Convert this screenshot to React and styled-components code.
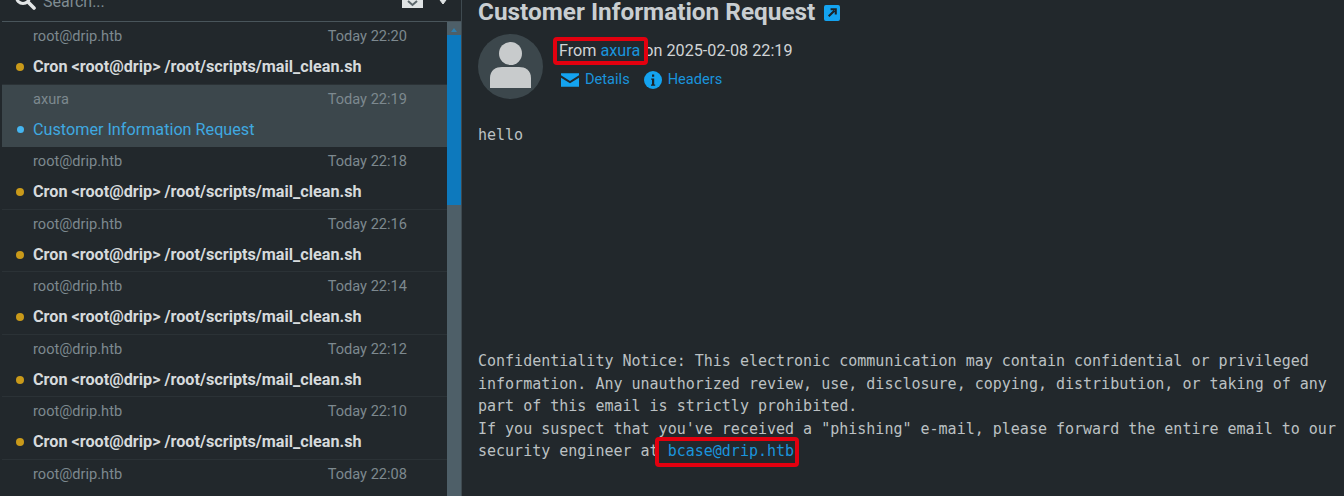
import React from "react";
import styled, { createGlobalStyle } from "styled-components";

const Global = createGlobalStyle`
  html, body { margin: 0; padding: 0; height: 100%; background: #22282c; overflow: hidden; }
  #root { height: 100%; }
`;

const Page = styled.div`
  width: 1344px;
  height: 496px;
  display: flex;
  overflow: hidden;
  background: #22282c;
  font-family: Roboto, "Liberation Sans", sans-serif;
`;

const ListPanel = styled.aside`
  width: 462px;
  height: 496px;
  flex: none;
  display: flex;
  flex-direction: column;
  box-sizing: border-box;
  padding-left: 2px;
  border-right: 1px solid #3f4a50;
  overflow: hidden;
`;

const SearchBar = styled.div`
  height: 22px;
  flex: none;
  box-sizing: border-box;
  display: flex;
  align-items: flex-end;
  padding: 0 11px 11px 12px;
  border-bottom: 1px solid #49555b;
  color: #7f8c92;
  font-size: 16px;
`;

const SearchIcon = styled.svg`
  width: 22px;
  height: 22px;
  flex: none;
  margin-bottom: -1px;
  color: #e3e6e7;
`;

const SearchText = styled.span`
  margin-left: 7px;
  line-height: 16px;
  flex: 1;
`;

const MailTool = styled.svg`
  flex: none;
  width: 21px;
  height: 20px;
  margin-bottom: 2px;
  color: #dfe3e4;
`;

const ChevronTool = styled.svg`
  flex: none;
  width: 14px;
  height: 10px;
  margin-left: 13px;
  margin-bottom: 5px;
  color: #dfe3e4;
`;

const ListBody = styled.div`
  flex: 1;
  display: flex;
  min-height: 0;
`;

const Rows = styled.div`
  flex: 1;
  min-width: 0;
`;

const Row = styled.div`
  height: 62.5px;
  box-sizing: border-box;
  padding: 4px 40px 0 31px;
  position: relative;
  background: ${(p) => (p.$active ? "#3c474c" : "#22282c")};
  border-bottom: 1px solid ${(p) => (p.$active ? "#3c474c" : "#2b3236")};
`;

const RowTop = styled.div`
  display: flex;
  justify-content: space-between;
  font-size: 14.6px;
  line-height: 20px;
  color: #7d898f;
`;

const Subject = styled.div`
  margin-top: 10px;
  font-size: 16.2px;
  line-height: 22px;
  font-weight: ${(p) => (p.$active ? 400 : 700)};
  color: ${(p) => (p.$active ? "#3fa9e0" : "#d6dadc")};
  white-space: nowrap;
`;

const Dot = styled.span`
  position: absolute;
  left: ${(p) => (p.$active ? 14.5 : 14)}px;
  top: ${(p) => (p.$active ? 41.5 : 41)}px;
  width: ${(p) => (p.$active ? 7 : 8)}px;
  height: ${(p) => (p.$active ? 7 : 8)}px;
  border-radius: 50%;
  background: ${(p) => (p.$active ? "#45b5f0" : "#c99a1a")};
`;

const Track = styled.div`
  width: 14px;
  flex: none;
  background: #4e5f68;
  padding-top: 13px;
  box-sizing: border-box;
  position: relative;
  &::before {
    content: "";
    position: absolute;
    left: 4px;
    top: 6px;
    border-left: 3px solid transparent;
    border-right: 3px solid transparent;
    border-bottom: 4px solid #2f7fae;
  }
`;

const Thumb = styled.div`
  height: 170px;
  background: #0d79bd;
`;

const Main = styled.main`
  flex: 1;
  min-width: 0;
  padding-left: 16px;
  display: flex;
  flex-direction: column;
  color: #d4d8da;
`;

const Title = styled.h1`
  margin: 0;
  height: 24px;
  display: flex;
  align-items: center;
  font-size: 24.35px;
  line-height: 24px;
  font-weight: 700;
  color: #c9ced1;
  white-space: nowrap;
`;

const ExternalIcon = styled.svg`
  width: 16px;
  height: 16px;
  margin-left: 9px;
  margin-top: 2px;
  flex: none;
`;

const Header = styled.div`
  display: flex;
  margin-top: 10px;
`;

const Avatar = styled.svg`
  width: 65px;
  height: 65px;
  flex: none;
`;

const Meta = styled.div`
  margin-left: 16px;
`;

const FromLine = styled.div`
  font-size: 16.2px;
  line-height: 20px;
  margin-top: 7px;
  color: #d0d4d6;
`;

const Blue = styled.span`
  color: #1a94dc;
`;

const Highlight = styled.span`
  position: relative;
  &::after {
    content: "";
    position: absolute;
    left: ${(p) => p.$l}px;
    right: ${(p) => p.$r}px;
    top: ${(p) => p.$t}px;
    bottom: ${(p) => p.$b}px;
    border: 4px solid #e3000f;
    border-radius: 4px;
    box-sizing: border-box;
  }
`;

const Links = styled.div`
  display: flex;
  align-items: center;
  margin-top: 8px;
  padding-left: 2px;
  font-size: 14.6px;
  line-height: 20px;
  color: #1a94dc;
`;

const LinkItem = styled.span`
  display: flex;
  align-items: center;
  gap: 6px;
  margin-right: 14px;
`;

const LinkIcon = styled.svg`
  width: 18px;
  height: 18px;
  flex: none;
  margin-top: 2px;
`;

const Body = styled.pre`
  margin: 25px 0 0;
  font-family: "DejaVu Sans Mono", "Liberation Mono", monospace;
  font-size: 15px;
  line-height: 22.5px;
  color: #bcc1c3;
  white-space: pre;
`;

const Spacer = styled.div`
  height: 178.5px;
`;

const rows = [
  ["root@drip.htb", "Today 22:20"],
  ["axura", "Today 22:19", true],
  ["root@drip.htb", "Today 22:18"],
  ["root@drip.htb", "Today 22:16"],
  ["root@drip.htb", "Today 22:14"],
  ["root@drip.htb", "Today 22:12"],
  ["root@drip.htb", "Today 22:10"],
  ["root@drip.htb", "Today 22:08"],
];

export default function App() {
  return (
    <Page>
      <Global />
      <ListPanel>
        <SearchBar>
          <SearchIcon viewBox="0 0 22 22" fill="none" stroke="currentColor">
            <circle cx="9" cy="8" r="6.5" strokeWidth="3" />
            <path d="M14 13l6 6" strokeWidth="3.6" strokeLinecap="round" />
          </SearchIcon>
          <SearchText>Search...</SearchText>
          <MailTool viewBox="0 0 21 20">
            <path d="M0 0h21v20H0z" fill="currentColor" />
            <path d="M6 13l4.5 4 4.5-4" fill="none" stroke="#5b666b" strokeWidth="2" />
          </MailTool>
          <ChevronTool viewBox="0 0 14 10">
            <path d="M1 1h12L7 9z" fill="currentColor" stroke="currentColor" strokeLinejoin="round" />
          </ChevronTool>
        </SearchBar>
        <ListBody>
          <Rows>
            {rows.map(([from, when, active]) => (
              <Row key={when} $active={active}>
                <RowTop>
                  <span>{from}</span>
                  <span>{when}</span>
                </RowTop>
                <Dot $active={active} />
                <Subject $active={active}>
                  {active ? "Customer Information Request" : "Cron <root@drip> /root/scripts/mail_clean.sh"}
                </Subject>
              </Row>
            ))}
          </Rows>
          <Track>
            <Thumb />
          </Track>
        </ListBody>
      </ListPanel>
      <Main>
        <Title>
          Customer Information Request
          <ExternalIcon viewBox="0 0 17 17">
            <rect width="17" height="17" rx="2" fill="#14a3f0" />
            <path d="M5 12l6-6M7 4.5h5.5V10" fill="none" stroke="#1c2327" strokeWidth="2.2" />
          </ExternalIcon>
        </Title>
        <Header>
          <Avatar viewBox="0 0 65 65">
            <circle cx="32.5" cy="32.5" r="32.5" fill="#3c474c" />
            <circle cx="32.5" cy="19.5" r="11.5" fill="#c8cbcc" />
            <path d="M12 54V44c0-8 6-11 12-11h17c6 0 12 3 12 11v10z" fill="#c8cbcc" />
          </Avatar>
          <Meta>
            <FromLine>
              <Highlight $l={-6} $r={-8} $t={-4} $b={-5}>
                From <Blue>axura</Blue>
              </Highlight>{" "}
              on 2025-02-08 22:19
            </FromLine>
            <Links>
              <LinkItem>
                <LinkIcon viewBox="0 0 19 18">
                  <path d="M0 2h19v2l-9.5 6L0 4zM0 6.5l9.5 6 9.5-6V16H0z" fill="#14a3f0" />
                </LinkIcon>
                Details
              </LinkItem>
              <LinkItem>
                <LinkIcon viewBox="0 0 18 18">
                  <circle cx="9" cy="9" r="9" fill="#14a3f0" />
                  <path d="M7.2 7.5h3v6h1v1.3H7v-1.3h1V8.8H7.2zM8 3.5h2.2v2.3H8z" fill="#1c2327" />
                </LinkIcon>
                Headers
              </LinkItem>
            </Links>
          </Meta>
        </Header>
        <Body>hello</Body>
        <Spacer />
        <Body>
          {`Confidentiality Notice: This electronic communication may contain confidential or privileged
information. Any unauthorized review, use, disclosure, copying, distribution, or taking of any
part of this email is strictly prohibited.
If you suspect that you've received a "phishing" e-mail, please forward the entire email to our
security engineer at `}
          <Highlight $l={-13} $r={-5} $t={-5} $b={-7}>
            <Blue>bcase@drip.htb</Blue>
          </Highlight>
        </Body>
      </Main>
    </Page>
  );
}
